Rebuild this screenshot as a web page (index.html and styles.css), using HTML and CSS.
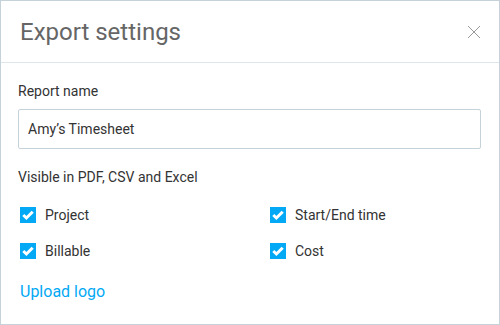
FILE: index.html
```html
<!DOCTYPE html>
<html lang="en">
<head>
    <meta charset="UTF-8">
    <meta name="viewport" content="width=device-width, initial-scale=1.0">
    <title>Export settings</title>
    <link rel="stylesheet" href="styles.css">
</head>
<body>
    <div class="modal">
        <header class="modal-header">
            <h1 class="modal-title">Export settings</h1>
            <button class="close-button" aria-label="Close">
                <svg width="14" height="14" viewBox="0 0 14 14">
                    <path d="M1 1L13 13M13 1L1 13" stroke="#999" stroke-width="1" fill="none"/>
                </svg>
            </button>
        </header>
        <div class="modal-body">
            <label class="field-label" for="reportName">Report name</label>
            <input id="reportName" class="text-input" type="text" value="Amy’s Timesheet">

            <div class="field-label visible-label">Visible in PDF, CSV and Excel</div>
            <div class="checkbox-grid">
                <label class="checkbox"><span class="box"><svg width="16" height="16" viewBox="0 0 16 16"><path d="M3.3 8l3.1 3 6.3-6.3" stroke="#fff" stroke-width="3" fill="none"/></svg></span>Project</label>
                <label class="checkbox"><span class="box"><svg width="16" height="16" viewBox="0 0 16 16"><path d="M3.3 8l3.1 3 6.3-6.3" stroke="#fff" stroke-width="3" fill="none"/></svg></span>Start/End time</label>
                <label class="checkbox"><span class="box"><svg width="16" height="16" viewBox="0 0 16 16"><path d="M3.3 8l3.1 3 6.3-6.3" stroke="#fff" stroke-width="3" fill="none"/></svg></span>Billable</label>
                <label class="checkbox"><span class="box"><svg width="16" height="16" viewBox="0 0 16 16"><path d="M3.3 8l3.1 3 6.3-6.3" stroke="#fff" stroke-width="3" fill="none"/></svg></span>Cost</label>
            </div>

            <a class="upload-link" href="#">Upload logo</a>
        </div>
    </div>
</body>
</html>
```

FILE: styles.css
```css
body {
    margin: 0;
    font-family: Roboto, "Liberation Sans", sans-serif;
    background-color: white;
}
.modal {
    width: 500px;
    height: 325px;
    box-sizing: border-box;
    border: 1px solid #c6d2d9;
    background-color: white;
}
.modal-header {
    display: flex;
    justify-content: space-between;
    align-items: center;
    height: 61px;
    padding: 0 18px 0 19px;
    border-bottom: 1px solid #dde6ea;
}
.modal-title {
    margin: 0;
    font-size: 24px;
    font-weight: 400;
    color: #666;
}
.close-button {
    background: none;
    border: none;
    padding: 0;
    width: 14px;
    height: 14px;
    cursor: pointer;
    display: flex;
}
.modal-body {
    padding: 20px 18px 0 17px;
}
.field-label {
    display: block;
    font-size: 14px;
    line-height: 17px;
    color: #333;
}
.text-input {
    display: block;
    width: 100%;
    height: 40px;
    box-sizing: border-box;
    margin-top: 9px;
    padding: 0 9px;
    border: 1px solid #c6d2d9;
    border-radius: 2px;
    font-family: inherit;
    font-size: 14px;
    color: #333;
    outline: none;
}
.visible-label {
    margin-top: 20px;
}
.checkbox-grid {
    display: grid;
    grid-template-columns: 250px 1fr;
    row-gap: 20px;
    margin-top: 21px;
    padding-left: 2px;
}
.checkbox {
    display: flex;
    align-items: center;
    gap: 9px;
    font-size: 14px;
    line-height: 16px;
    color: #333;
}
.box {
    width: 16px;
    height: 16px;
    background-color: #03a9f4;
    display: flex;
}
.upload-link {
    display: inline-block;
    margin-top: 23px;
    margin-left: 2px;
    font-size: 16px;
    color: #03a9f4;
    text-decoration: none;
}
```
